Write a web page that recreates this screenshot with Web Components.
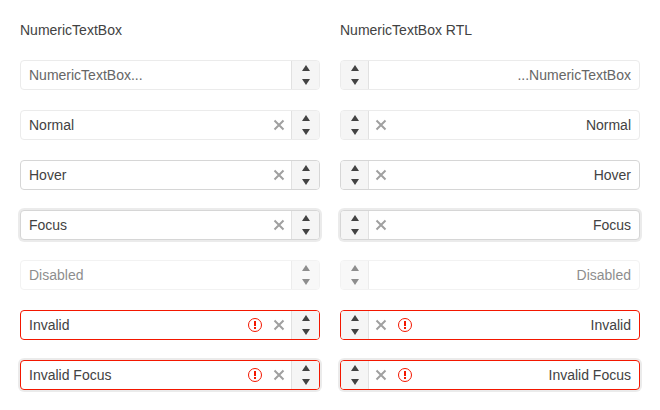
<!DOCTYPE html>
<html lang="en"><head><meta charset="utf-8"><title>NumericTextBox</title>
<style>
body{margin:0;background:#fff;font:14px/20px "Liberation Sans",Arial,sans-serif;color:#424242}
</style></head><body>
<numeric-gallery></numeric-gallery>
<script>
class NumericBox extends HTMLElement{
 connectedCallback(){
  const s=this.getAttribute('state')||'';
  const has=n=>s.split(' ').includes(n);
  this.attachShadow({mode:'open'}).innerHTML=`<style>
  :host{display:flex;box-sizing:border-box;height:30px;border:1px solid #ebebeb;border-radius:4px;background:#fff;align-items:stretch}
  :host([state~=hover]),:host([state~=focus]){border-color:#d6d6d6}
  :host([state~=focus]){box-shadow:0 0 0 2px rgba(0,0,0,.08)}
  :host([state~=invalid]){border-color:#f31700}
  :host([state~=disabled]){opacity:.6}
  .text{flex:1;padding:4px 8px;white-space:nowrap}
  :host([state~=empty]) .text{color:#666}
  .icon{width:24px;display:flex;align-items:center;justify-content:center}
  .spin{width:27px;background:#f5f5f5;border-inline-start:1px solid #e1e1e1;display:flex;flex-direction:column;border-start-end-radius:3px;border-end-end-radius:3px}
  .spin svg{width:27px;height:14px;display:block}
  </style><div class="text"><slot></slot></div>
  ${has('invalid')?'<div class="icon"><svg width="16" height="16" viewBox="0 0 16 16"><circle cx="8" cy="8" r="6.5" fill="none" stroke="#f31700"/><path d="M7 4h2v5H7zM7 10h2v2H7z" fill="#f31700"/></svg></div>':''}
  ${has('empty')||has('disabled')?'':'<div class="icon"><svg width="16" height="16" viewBox="0 0 16 16"><path d="M3.5 3.5l9 9M12.5 3.5l-9 9" stroke="#a0a0a0" stroke-width="2"/></svg></div>'}
  <div class="spin"><svg viewBox="0 0 27 14"><path d="M10 10h8l-4-6z" fill="#424242"/></svg><svg viewBox="0 0 27 14"><path d="M10 4h8l-4 6z" fill="#424242"/></svg></div>`;
 }}
customElements.define('numeric-box',NumericBox);
class NumericGallery extends HTMLElement{
 connectedCallback(){
  const rows=[['empty','NumericTextBox...'],['','Normal'],['hover','Hover'],['focus','Focus'],['disabled','Disabled'],['invalid','Invalid'],['invalid focus','Invalid Focus']];
  const cells=rows.map(([s,t])=>`<numeric-box state="${s}">${t}</numeric-box><numeric-box dir="rtl" state="${s}">${t}</numeric-box>`).join('');
  this.attachShadow({mode:'open'}).innerHTML=`<style>:host{display:grid;grid-template-columns:300px 300px;grid-template-rows:20px;grid-auto-rows:30px;gap:20px;padding:20px}</style><div>NumericTextBox</div><div>NumericTextBox RTL</div>${cells}`;
 }}
customElements.define('numeric-gallery',NumericGallery);
</script></body></html>
